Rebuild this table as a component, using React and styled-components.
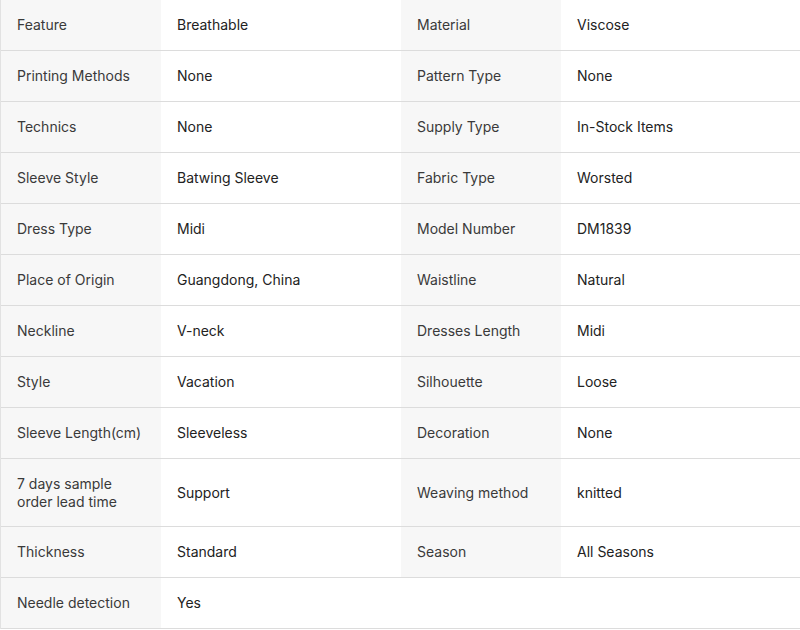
import React from 'react';
import styled, { createGlobalStyle } from 'styled-components';

const GlobalStyle = createGlobalStyle`
  html, body {
    margin: 0;
    padding: 0;
    background: #fff;
  }
  body {
    font-family: Inter, "Noto Sans", Arial, sans-serif;
    width: 800px;
    overflow: hidden;
  }
`;

const SpecTable = styled.table`
  width: 801px;
  border-collapse: separate;
  border-spacing: 0;
  table-layout: fixed;
  border-left: 1px solid #e2e2e2;
  font-size: 14px;
`;

const Cell = styled.td`
  height: 51px;
  box-sizing: border-box;
  padding: 16px 16px;
  line-height: 17.5px;
  vertical-align: middle;
  border-bottom: 1px solid #dcdcdc;
`;

const Label = styled(Cell)`
  width: 160px;
  background: ${(p) => (p.$empty ? '#fff' : '#f7f7f7')};
  color: #3a3a3a;
`;

const Value = styled(Cell)`
  width: 240px;
  background: #fff;
  color: #222;
`;

const specs = [
  ['Feature', 'Breathable', 'Material', 'Viscose'],
  ['Printing Methods', 'None', 'Pattern Type', 'None'],
  ['Technics', 'None', 'Supply Type', 'In-Stock Items'],
  ['Sleeve Style', 'Batwing Sleeve', 'Fabric Type', 'Worsted'],
  ['Dress Type', 'Midi', 'Model Number', 'DM1839'],
  ['Place of Origin', 'Guangdong, China', 'Waistline', 'Natural'],
  ['Neckline', 'V-neck', 'Dresses Length', 'Midi'],
  ['Style', 'Vacation', 'Silhouette', 'Loose'],
  ['Sleeve Length(cm)', 'Sleeveless', 'Decoration', 'None'],
  ['7 days sample order lead time', 'Support', 'Weaving method', 'knitted'],
  ['Thickness', 'Standard', 'Season', 'All Seasons'],
  ['Needle detection', 'Yes', '', ''],
];

export default function App() {
  return (
    <>
      <GlobalStyle />
      <SpecTable>
        <tbody>
          {specs.map(([l1, v1, l2, v2]) => (
            <tr key={l1}>
              <Label>{l1}</Label>
              <Value>{v1}</Value>
              <Label $empty={!l2}>{l2}</Label>
              <Value>{v2}</Value>
            </tr>
          ))}
        </tbody>
      </SpecTable>
    </>
  );
}
